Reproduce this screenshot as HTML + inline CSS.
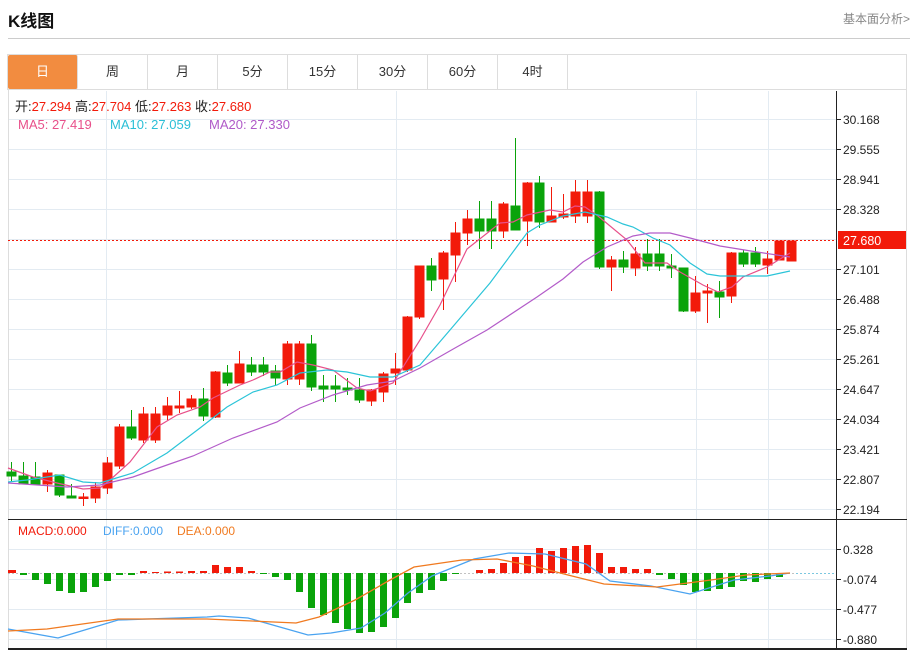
<!DOCTYPE html>
<html><head><meta charset="utf-8">
<style>
body{margin:0;width:913px;height:650px;background:#fff;font-family:"Liberation Sans","Noto Sans CJK SC",sans-serif;position:relative;overflow:hidden}
.t{position:absolute;left:8px;top:7px;font-size:17px;font-weight:bold;color:#111}
.r{position:absolute;right:3px;top:10px;font-size:12px;color:#888}
.hl{position:absolute;left:8px;top:38px;width:902px;height:1px;background:#ccc}
.tabs{position:absolute;left:7px;top:54px;width:900px;height:36px;border:1px solid #ddd;box-sizing:border-box;display:flex}
.tabs div{width:70px;flex:0 0 70px;box-sizing:border-box;border-right:1px solid #ddd;text-align:center;line-height:34px;font-size:13px;color:#333}
.tabs div.a{background:#f28c40;color:#fff;border-radius:2px}
svg{position:absolute;left:0;top:0}
</style></head><body>
<div class="t">K线图</div>
<div class="r">基本面分析&gt;</div>
<div class="hl"></div>
<div class="tabs"><div class="a">日</div><div>周</div><div>月</div><div>5分</div><div>15分</div><div>30分</div><div>60分</div><div>4时</div></div>
<svg width="913" height="650" viewBox="0 0 913 650" font-family="Liberation Sans, Noto Sans CJK SC, sans-serif">
<g stroke="#e3ebf2" stroke-width="1">
<line x1="8" y1="119.5" x2="836" y2="119.5"/><line x1="8" y1="149.5" x2="836" y2="149.5"/><line x1="8" y1="179.5" x2="836" y2="179.5"/><line x1="8" y1="209.5" x2="836" y2="209.5"/><line x1="8" y1="239.5" x2="836" y2="239.5"/><line x1="8" y1="269.5" x2="836" y2="269.5"/><line x1="8" y1="299.5" x2="836" y2="299.5"/><line x1="8" y1="329.5" x2="836" y2="329.5"/><line x1="8" y1="359.5" x2="836" y2="359.5"/><line x1="8" y1="389.5" x2="836" y2="389.5"/><line x1="8" y1="419.5" x2="836" y2="419.5"/><line x1="8" y1="449.5" x2="836" y2="449.5"/><line x1="8" y1="479.5" x2="836" y2="479.5"/><line x1="8" y1="509.5" x2="836" y2="509.5"/>
<line x1="8" y1="549.5" x2="836" y2="549.5"/><line x1="8" y1="579.5" x2="836" y2="579.5"/><line x1="8" y1="609.5" x2="836" y2="609.5"/><line x1="8" y1="639.5" x2="836" y2="639.5"/>
<line x1="106.5" y1="91" x2="106.5" y2="649"/><line x1="396.5" y1="91" x2="396.5" y2="649"/><line x1="696.5" y1="91" x2="696.5" y2="649"/><line x1="768.5" y1="91" x2="768.5" y2="649"/>
</g>
<line x1="8.5" y1="90" x2="8.5" y2="649" stroke="#ddd"/>
<line x1="906.5" y1="90" x2="906.5" y2="649" stroke="#ddd"/>
<line x1="836.5" y1="91" x2="836.5" y2="649" stroke="#222"/>
<line x1="8" y1="519.5" x2="907" y2="519.5" stroke="#222"/>
<line x1="8" y1="649" x2="907" y2="649" stroke="#222" stroke-width="2"/>
<g stroke="#222"><line x1="836" y1="119.5" x2="841" y2="119.5"/><line x1="836" y1="149.5" x2="841" y2="149.5"/><line x1="836" y1="179.5" x2="841" y2="179.5"/><line x1="836" y1="209.5" x2="841" y2="209.5"/><line x1="836" y1="269.5" x2="841" y2="269.5"/><line x1="836" y1="299.5" x2="841" y2="299.5"/><line x1="836" y1="329.5" x2="841" y2="329.5"/><line x1="836" y1="359.5" x2="841" y2="359.5"/><line x1="836" y1="389.5" x2="841" y2="389.5"/><line x1="836" y1="419.5" x2="841" y2="419.5"/><line x1="836" y1="449.5" x2="841" y2="449.5"/><line x1="836" y1="479.5" x2="841" y2="479.5"/><line x1="836" y1="509.5" x2="841" y2="509.5"/><line x1="836" y1="549.5" x2="841" y2="549.5"/><line x1="836" y1="579.5" x2="841" y2="579.5"/><line x1="836" y1="609.5" x2="841" y2="609.5"/><line x1="836" y1="639.5" x2="841" y2="639.5"/></g>
<g font-size="12" fill="#222">
<text x="843" y="124">30.168</text><text x="843" y="154">29.555</text><text x="843" y="184">28.941</text><text x="843" y="214">28.328</text><text x="843" y="274">27.101</text><text x="843" y="304">26.488</text><text x="843" y="334">25.874</text><text x="843" y="364">25.261</text><text x="843" y="394">24.647</text><text x="843" y="424">24.034</text><text x="843" y="454">23.421</text><text x="843" y="484">22.807</text><text x="843" y="514">22.194</text>
<text x="843" y="554">0.328</text><text x="843" y="584">-0.074</text><text x="843" y="614">-0.477</text><text x="843" y="644">-0.880</text>
</g>
<line x1="8" y1="240.5" x2="836" y2="240.5" stroke="#f21a0a" stroke-dasharray="2,2"/>
<rect x="838" y="231" width="68" height="18" fill="#f21a0a"/>
<text x="843" y="245" font-size="12.5" fill="#fff">27.680</text>
<g font-size="13">
<text x="15" y="111" fill="#222">开:<tspan fill="#f21a0a">27.294</tspan>  高:<tspan fill="#f21a0a">27.704</tspan>  低:<tspan fill="#f21a0a">27.263</tspan>  收:<tspan fill="#f21a0a">27.680</tspan></text>
<text x="18" y="129" fill="#e8508a">MA5: 27.419</text><text x="110" y="129" fill="#2bbfd6">MA10: 27.059</text><text x="209" y="129" fill="#b05ac8">MA20: 27.330</text>
</g>
<g font-size="12">
<text x="18" y="535" fill="#f21a0a">MACD:0.000</text><text x="103" y="535" fill="#4aa3f0">DIFF:0.000</text><text x="177" y="535" fill="#f07a20">DEA:0.000</text>
</g>
<g stroke="#0aa30a" fill="#0aa30a">
<line x1="11.5" y1="462" x2="11.5" y2="482"/><rect x="7" y="472" width="9" height="4"/>
<line x1="23.5" y1="462" x2="23.5" y2="484"/><rect x="19" y="476" width="9" height="8"/>
<line x1="35.5" y1="462" x2="35.5" y2="484"/><rect x="31" y="477" width="9" height="7"/>
<line x1="59.5" y1="475" x2="59.5" y2="497"/><rect x="55" y="475" width="9" height="20"/>
<line x1="71.5" y1="484" x2="71.5" y2="498"/><rect x="67" y="496" width="9" height="2"/>
<line x1="131.5" y1="410" x2="131.5" y2="440"/><rect x="127" y="427" width="9" height="11"/>
<line x1="203.5" y1="388" x2="203.5" y2="421"/><rect x="199" y="399" width="9" height="17"/>
<line x1="227.5" y1="365" x2="227.5" y2="386"/><rect x="223" y="373" width="9" height="10"/>
<line x1="251.5" y1="357" x2="251.5" y2="376"/><rect x="247" y="365" width="9" height="7"/>
<line x1="263.5" y1="357" x2="263.5" y2="376"/><rect x="259" y="365" width="9" height="7"/>
<line x1="275.5" y1="365" x2="275.5" y2="386"/><rect x="271" y="371" width="9" height="7"/>
<line x1="311.5" y1="335" x2="311.5" y2="391"/><rect x="307" y="344" width="9" height="43"/>
<line x1="323.5" y1="375" x2="323.5" y2="402"/><rect x="319" y="386" width="9" height="3"/>
<line x1="335.5" y1="375" x2="335.5" y2="402"/><rect x="331" y="386" width="9" height="3"/>
<line x1="347.5" y1="378" x2="347.5" y2="395"/><rect x="343" y="388" width="9" height="2"/>
<line x1="359.5" y1="378" x2="359.5" y2="403"/><rect x="355" y="390" width="9" height="10"/>
<line x1="431.5" y1="258" x2="431.5" y2="291"/><rect x="427" y="266" width="9" height="14"/>
<line x1="479.5" y1="201" x2="479.5" y2="249"/><rect x="475" y="219" width="9" height="12"/>
<line x1="491.5" y1="201" x2="491.5" y2="249"/><rect x="487" y="219" width="9" height="12"/>
<line x1="515.5" y1="138" x2="515.5" y2="230"/><rect x="511" y="206" width="9" height="24"/>
<line x1="539.5" y1="176" x2="539.5" y2="228"/><rect x="535" y="183" width="9" height="39"/>
<line x1="599.5" y1="191" x2="599.5" y2="269"/><rect x="595" y="192" width="9" height="75"/>
<line x1="623.5" y1="251" x2="623.5" y2="273"/><rect x="619" y="260" width="9" height="7"/>
<line x1="647.5" y1="239" x2="647.5" y2="271"/><rect x="643" y="254" width="9" height="12"/>
<line x1="659.5" y1="239" x2="659.5" y2="271"/><rect x="655" y="254" width="9" height="12"/>
<line x1="671.5" y1="254" x2="671.5" y2="278"/><rect x="667" y="266" width="9" height="2"/>
<line x1="683.5" y1="268" x2="683.5" y2="312"/><rect x="679" y="268" width="9" height="43"/>
<line x1="719.5" y1="281" x2="719.5" y2="318"/><rect x="715" y="292" width="9" height="5"/>
<line x1="743.5" y1="250" x2="743.5" y2="267"/><rect x="739" y="253" width="9" height="11"/>
<line x1="755.5" y1="247" x2="755.5" y2="267"/><rect x="751" y="253" width="9" height="11"/>
</g>
<g stroke="#f21a0a" fill="#f21a0a">
<line x1="47.5" y1="470" x2="47.5" y2="492"/><rect x="43" y="473" width="9" height="11"/>
<line x1="83.5" y1="493" x2="83.5" y2="506"/><rect x="79" y="497" width="9" height="1.5"/>
<line x1="95.5" y1="482" x2="95.5" y2="503"/><rect x="91" y="487" width="9" height="11"/>
<line x1="107.5" y1="457" x2="107.5" y2="494"/><rect x="103" y="463" width="9" height="25"/>
<line x1="119.5" y1="424" x2="119.5" y2="469"/><rect x="115" y="427" width="9" height="39"/>
<line x1="143.5" y1="407" x2="143.5" y2="443"/><rect x="139" y="414" width="9" height="26"/>
<line x1="155.5" y1="407" x2="155.5" y2="443"/><rect x="151" y="414" width="9" height="26"/>
<line x1="167.5" y1="397" x2="167.5" y2="420"/><rect x="163" y="406" width="9" height="9"/>
<line x1="179.5" y1="391" x2="179.5" y2="413"/><rect x="175" y="406" width="9" height="2"/>
<line x1="191.5" y1="395" x2="191.5" y2="409"/><rect x="187" y="399" width="9" height="8"/>
<line x1="215.5" y1="371" x2="215.5" y2="418"/><rect x="211" y="372" width="9" height="45"/>
<line x1="239.5" y1="351" x2="239.5" y2="383"/><rect x="235" y="364" width="9" height="19"/>
<line x1="287.5" y1="341" x2="287.5" y2="385"/><rect x="283" y="344" width="9" height="35"/>
<line x1="299.5" y1="341" x2="299.5" y2="385"/><rect x="295" y="344" width="9" height="35"/>
<line x1="371.5" y1="389" x2="371.5" y2="406"/><rect x="367" y="390" width="9" height="11"/>
<line x1="383.5" y1="372" x2="383.5" y2="402"/><rect x="379" y="374" width="9" height="18"/>
<line x1="395.5" y1="353" x2="395.5" y2="385"/><rect x="391" y="369" width="9" height="4"/>
<line x1="407.5" y1="316" x2="407.5" y2="372"/><rect x="403" y="317" width="9" height="53"/>
<line x1="419.5" y1="266" x2="419.5" y2="319"/><rect x="415" y="266" width="9" height="51"/>
<line x1="443.5" y1="251" x2="443.5" y2="310"/><rect x="439" y="253" width="9" height="26"/>
<line x1="455.5" y1="222" x2="455.5" y2="282"/><rect x="451" y="233" width="9" height="22"/>
<line x1="467.5" y1="210" x2="467.5" y2="245"/><rect x="463" y="219" width="9" height="14"/>
<line x1="503.5" y1="202" x2="503.5" y2="238"/><rect x="499" y="204" width="9" height="27"/>
<line x1="527.5" y1="182" x2="527.5" y2="246"/><rect x="523" y="183" width="9" height="38"/>
<line x1="551.5" y1="187" x2="551.5" y2="222"/><rect x="547" y="216" width="9" height="6"/>
<line x1="563.5" y1="194" x2="563.5" y2="219"/><rect x="559" y="214" width="9" height="3"/>
<line x1="575.5" y1="180" x2="575.5" y2="223"/><rect x="571" y="192" width="9" height="24"/>
<line x1="587.5" y1="180" x2="587.5" y2="223"/><rect x="583" y="192" width="9" height="24"/>
<line x1="611.5" y1="256" x2="611.5" y2="291"/><rect x="607" y="260" width="9" height="7"/>
<line x1="635.5" y1="247" x2="635.5" y2="276"/><rect x="631" y="254" width="9" height="14"/>
<line x1="695.5" y1="276" x2="695.5" y2="313"/><rect x="691" y="293" width="9" height="18"/>
<line x1="707.5" y1="284" x2="707.5" y2="323"/><rect x="703" y="291" width="9" height="2"/>
<line x1="731.5" y1="252" x2="731.5" y2="303"/><rect x="727" y="253" width="9" height="43"/>
<line x1="767.5" y1="251" x2="767.5" y2="274"/><rect x="763" y="259" width="9" height="6"/>
<rect x="775" y="241" width="9" height="19"/>
<rect x="787" y="241" width="9" height="20"/>
</g>
<g fill="none" stroke-width="1.2">
<polyline stroke="#e8508a" points="8,468 33,477 57,483 83,489 100,488 110,480 130,462 157,427 177,415 200,407 213,398 240,385 253,380 270,372 280,372 297,362 313,365 333,370 357,388 370,391 393,383 420,340 440,305 467,249 500,223 513,222 527,215 550,210 563,212 575,206 585,207 598,216 627,240 645,263 667,263 680,272 703,285 718,292 732,287 743,277 767,267 790,253"/>
<polyline stroke="#2bc4d8" points="8,482 27,480 60,475 83,482 100,483 113,479 133,473 167,453 200,428 227,407 253,392 277,385 300,373 327,370 347,372 370,377 393,377 420,365 450,330 490,283 527,233 540,225 563,216 585,212 607,217 623,224 633,227 653,238 670,245 690,263 707,274 720,276 767,276 790,271"/>
<polyline stroke="#b35cc9" points="8,483 67,487 100,485 133,477 167,465 193,456 233,438 277,422 300,408 333,395 367,385 393,381 420,368 455,348 487,330 537,297 563,279 583,262 607,247 633,236 650,233 670,233 690,238 720,246 757,252 790,257"/>
</g>
<line x1="796" y1="573.5" x2="836" y2="573.5" stroke="#7cc8e0" stroke-dasharray="2,2"/>
<line x1="8" y1="573.5" x2="796" y2="573.5" stroke="#999" stroke-dasharray="2,2" stroke-opacity="0.6"/>
<g fill="#f21a0a">
<rect x="8" y="570" width="8" height="3"/><rect x="140" y="571" width="7" height="2"/><rect x="152" y="572" width="7" height="1"/><rect x="164" y="571.5" width="7" height="1.5"/><rect x="176" y="571.5" width="7" height="1.5"/><rect x="188" y="571" width="7" height="2"/><rect x="200" y="571" width="7" height="2"/><rect x="212" y="565" width="7" height="8"/><rect x="224" y="567" width="7" height="6"/><rect x="236" y="567" width="7" height="6"/><rect x="248" y="571" width="7" height="2"/>
<rect x="476" y="570" width="7" height="3"/><rect x="488" y="569" width="7" height="4"/><rect x="500" y="563" width="7" height="10"/><rect x="512" y="557" width="7" height="16"/><rect x="524" y="556" width="7" height="17"/><rect x="536" y="548" width="7" height="25"/><rect x="548" y="551" width="7" height="22"/><rect x="560" y="548" width="7" height="25"/><rect x="572" y="546" width="7" height="27"/><rect x="584" y="545" width="7" height="28"/><rect x="596" y="553" width="7" height="20"/><rect x="608" y="567" width="7" height="6"/><rect x="620" y="567" width="7" height="6"/><rect x="632" y="569" width="7" height="4"/><rect x="644" y="569" width="7" height="4"/>
</g>
<g fill="#0aa30a">
<rect x="20" y="573" width="7" height="2"/><rect x="32" y="573" width="7" height="7"/><rect x="44" y="573" width="7" height="11"/><rect x="56" y="573" width="7" height="18"/><rect x="68" y="573" width="7" height="20"/><rect x="80" y="573" width="7" height="19"/><rect x="92" y="573" width="7" height="14"/><rect x="104" y="573" width="7" height="8"/><rect x="116" y="573" width="7" height="2"/><rect x="128" y="573" width="7" height="2"/>
<rect x="260" y="573" width="7" height="1"/><rect x="272" y="573" width="7" height="4"/><rect x="284" y="573" width="7" height="7"/><rect x="296" y="573" width="7" height="19"/><rect x="308" y="573" width="7" height="35"/><rect x="320" y="573" width="7" height="42"/><rect x="332" y="573" width="7" height="50"/><rect x="344" y="573" width="7" height="56"/><rect x="356" y="573" width="7" height="60"/><rect x="368" y="573" width="7" height="59"/><rect x="380" y="573" width="7" height="54"/><rect x="392" y="573" width="7" height="45"/><rect x="404" y="573" width="7" height="30"/><rect x="416" y="573" width="7" height="20"/><rect x="428" y="573" width="7" height="17"/><rect x="440" y="573" width="7" height="8"/><rect x="452" y="573" width="7" height="1"/>
<rect x="656" y="573" width="7" height="2"/><rect x="668" y="573" width="7" height="6"/><rect x="680" y="573" width="7" height="12"/><rect x="692" y="573" width="7" height="19"/><rect x="704" y="573" width="7" height="18"/><rect x="716" y="573" width="7" height="16"/><rect x="728" y="573" width="7" height="14"/><rect x="740" y="573" width="7" height="8"/><rect x="752" y="573" width="7" height="9"/><rect x="764" y="573" width="7" height="6"/><rect x="776" y="573" width="7" height="4"/>
</g>
<g fill="none" stroke-width="1.3">
<polyline stroke="#4aa3f0" points="8,629 58,638 118,620 207,617 219,616 248,618 308,635 331,633 361,628 385,613 408,593 432,576 474,559 509,553 545,554 586,564 610,581 651,586 690,594 734,580 770,576 790,573"/>
<polyline stroke="#f07a20" points="8,631 47,629 118,619 207,619 296,623 319,617 355,600 390,580 414,567 462,560 497,559 533,566 568,575 604,584 657,587 711,580 746,575 790,573"/>
</g>
</svg>
</body></html>
